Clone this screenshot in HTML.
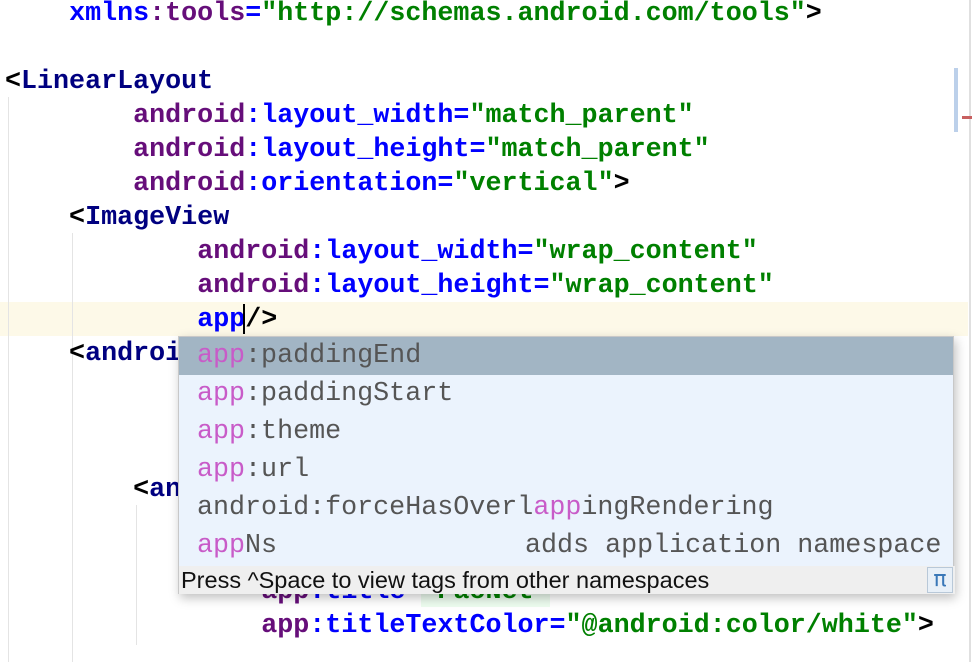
<!DOCTYPE html>
<html><head><meta charset="utf-8"><style>
html,body{margin:0;padding:0;background:#fff;width:972px;height:662px;overflow:hidden;position:relative}
.l{position:absolute;left:5px;height:34px;line-height:34px;font-family:"Liberation Mono",monospace;font-weight:bold;font-size:26.7px;white-space:pre;color:#000}
.t{color:#000080}.n{color:#660e7a}.a{color:#0000ff}.v{color:#008000}
.g{position:absolute;width:1px;background:#e4e4e4}
#pop{position:absolute;left:178px;top:336px;width:776px;height:258px;background:#ebf3fd;box-shadow:2px 4px 10px rgba(0,0,0,.25);border:1px solid #c8c8c8;box-sizing:border-box}
.r{position:absolute;left:0;width:100%;height:38px;line-height:38px;font-family:"Liberation Mono",monospace;font-size:26.7px;color:#555;white-space:pre;padding-left:18px;box-sizing:border-box}
.p{color:#c85bc8}
#ft{position:absolute;left:0;top:229px;width:100%;height:28px;background:#efefef;font-family:"Liberation Sans",sans-serif;font-size:23.5px;line-height:28px;padding-left:2px;color:#111}
</style></head><body>
<div style="position:absolute;left:0;top:302px;width:968px;height:34px;background:#fdf9e8"></div>
<div class="g" style="left:8px;top:97px;height:565px"></div>
<div class="g" style="left:72px;top:233px;height:429px"></div>
<div class="g" style="left:136px;top:505px;height:140px"></div>
<div style="position:absolute;left:969px;top:0;width:2px;height:662px;background:#e0e0e0"></div>
<div style="position:absolute;left:954px;top:68px;width:4px;height:64px;background:#bcd0ea"></div>
<div style="position:absolute;left:962px;top:116px;width:10px;height:3px;background:#c86060"></div>

<div class="l" style="top:-3px">    <span class="a">xmlns</span><span class="n">:tools</span><span class="a">=</span><span class="v">"http://schemas.android.com/tools"</span>&gt;</div>
<div class="l" style="top:65px">&lt;<span class="t">LinearLayout</span></div>
<div class="l" style="top:99px">        <span class="n">android</span><span class="a">:layout_width=</span><span class="v">"match_parent"</span></div>
<div class="l" style="top:133px">        <span class="n">android</span><span class="a">:layout_height=</span><span class="v">"match_parent"</span></div>
<div class="l" style="top:167px">        <span class="n">android</span><span class="a">:orientation=</span><span class="v">"vertical"</span>&gt;</div>
<div class="l" style="top:201px">    &lt;<span class="t">ImageView</span></div>
<div class="l" style="top:235px">            <span class="n">android</span><span class="a">:layout_width=</span><span class="v">"wrap_content"</span></div>
<div class="l" style="top:269px">            <span class="n">android</span><span class="a">:layout_height=</span><span class="v">"wrap_content"</span></div>
<div class="l" style="top:303px">            <span class="a">app</span>/&gt;</div>
<div style="position:absolute;left:243px;top:304px;width:2px;height:30px;background:#000"></div>
<div class="l" style="top:337px">    &lt;<span class="t">android</span></div>
<div class="l" style="top:473px">        &lt;<span class="t">android</span></div>
<div class="l" style="top:575px">                <span class="n">app</span><span class="a">:title=</span><span class="v" style="background:#edfcef">"PaoNet"</span></div>
<div class="l" style="top:609px">                <span class="n">app</span><span class="a">:titleTextColor=</span><span class="v">"@android:color/white"</span>&gt;</div>

<div id="pop">
<div class="r" style="top:0;background:#a2b5c4"><span class="p">app</span>:paddingEnd</div>
<div class="r" style="top:38px"><span class="p">app</span>:paddingStart</div>
<div class="r" style="top:76px"><span class="p">app</span>:theme</div>
<div class="r" style="top:114px"><span class="p">app</span>:url</div>
<div class="r" style="top:152px">android:forceHasOverl<span class="p">app</span>ingRendering</div>
<div class="r" style="top:190px"><span class="p">app</span>Ns<span style="position:absolute;left:346px">adds application namespace</span></div>
<div id="ft">Press ^Space to view tags from other namespaces
<div style="position:absolute;right:2px;top:1px;width:24px;height:24px;border:1px solid #b8c8d8;background:#e8f0f8;color:#3a78b8;font-family:'DejaVu Sans',sans-serif;font-size:22px;line-height:24px;text-align:center">π</div></div>
</div>
</body></html>
